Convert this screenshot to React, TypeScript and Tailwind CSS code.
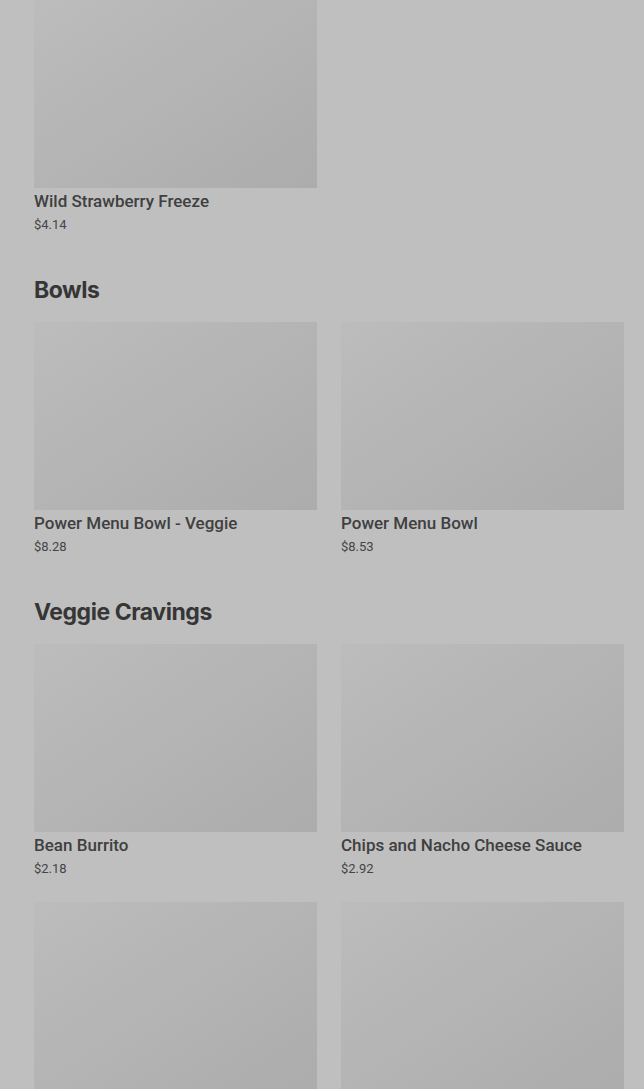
const sections = [
  {
    title: null as string | null,
    items: [{ name: "Wild Strawberry Freeze", price: "$4.14" }],
  },
  {
    title: "Bowls",
    items: [
      { name: "Power Menu Bowl - Veggie", price: "$8.28" },
      { name: "Power Menu Bowl", price: "$8.53" },
    ],
  },
  {
    title: "Veggie Cravings",
    items: [
      { name: "Bean Burrito", price: "$2.18" },
      { name: "Chips and Nacho Cheese Sauce", price: "$2.92" },
      { name: "", price: "" },
      { name: "", price: "" },
    ],
  },
];

function MenuItem({ name, price }: { name: string; price: string }) {
  return (
    <div className="flex h-[234px] flex-col">
      <div className="h-[188px] w-full shrink-0 bg-gradient-to-br from-[#bcbcbc] to-[#acacac]" />
      <div className="mt-[3px] text-[17px] font-medium leading-5 text-[#404040]">{name}</div>
      <div className="mt-[5px] text-[13px] leading-[18px] text-[#454545]">{price}</div>
    </div>
  );
}

export default function App() {
  return (
    <div className="h-[1089px] overflow-hidden bg-[#bfbfbf] pl-[34px] pr-[20px] font-['Roboto','Liberation_Sans',sans-serif]">
      {sections.map((section, i) => (
        <section key={i}>
          {section.title && (
            <h2 className="mt-[40px] mb-[16px] font-['Inter','Liberation_Sans',sans-serif] text-[23px] font-bold leading-8 tracking-[-0.02em] text-[#363636]">
              {section.title}
            </h2>
          )}
          <div className="grid grid-cols-2 gap-x-6 gap-y-6">
            {section.items.map((item, j) => (
              <MenuItem key={j} name={item.name} price={item.price} />
            ))}
          </div>
        </section>
      ))}
    </div>
  );
}
